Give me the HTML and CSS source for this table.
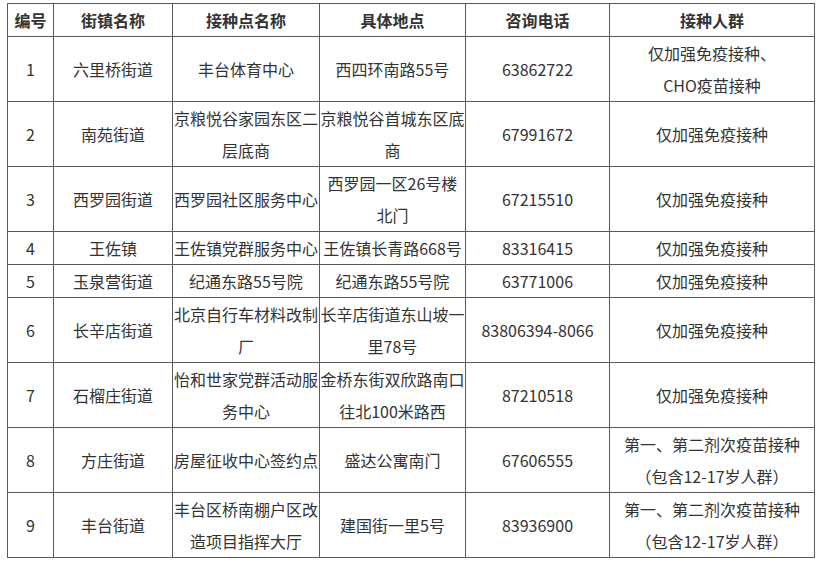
FILE: index.html
```html
<!DOCTYPE html>
<html lang="zh-CN">
<head>
<meta charset="utf-8">
<title>接种点</title>
<link rel="stylesheet" href="styles.css">
</head>
<body>
<table class="sites">
  <colgroup>
    <col class="c1"><col class="c2"><col class="c3"><col class="c4"><col class="c5"><col class="c6">
  </colgroup>
  <thead>
    <tr><th>编号</th><th>街镇名称</th><th>接种点名称</th><th>具体地点</th><th>咨询电话</th><th>接种人群</th></tr>
  </thead>
  <tbody>
    <tr class="tall"><td>1</td><td>六里桥街道</td><td>丰台体育中心</td><td>西四环南路55号</td><td>63862722</td><td>仅加强免疫接种、<br>CHO疫苗接种</td></tr>
    <tr class="tall"><td>2</td><td>南苑街道</td><td>京粮悦谷家园东区二层底商</td><td>京粮悦谷首城东区底商</td><td>67991672</td><td>仅加强免疫接种</td></tr>
    <tr class="tall"><td>3</td><td>西罗园街道</td><td>西罗园社区服务中心</td><td>西罗园一区26号楼<br>北门</td><td>67215510</td><td>仅加强免疫接种</td></tr>
    <tr><td>4</td><td>王佐镇</td><td>王佐镇党群服务中心</td><td>王佐镇长青路668号</td><td>83316415</td><td>仅加强免疫接种</td></tr>
    <tr><td>5</td><td>玉泉营街道</td><td>纪通东路55号院</td><td>纪通东路55号院</td><td>63771006</td><td>仅加强免疫接种</td></tr>
    <tr class="tall"><td>6</td><td>长辛店街道</td><td>北京自行车材料改制厂</td><td>长辛店街道东山坡一里78号</td><td>83806394-8066</td><td>仅加强免疫接种</td></tr>
    <tr class="tall"><td>7</td><td>石榴庄街道</td><td>怡和世家党群活动服务中心</td><td>金桥东街双欣路南口往北100米路西</td><td>87210518</td><td>仅加强免疫接种</td></tr>
    <tr class="tall"><td>8</td><td>方庄街道</td><td>房屋征收中心签约点</td><td>盛达公寓南门</td><td>67606555</td><td>第一、第二剂次疫苗接种<br>（包含12-17岁人群）</td></tr>
    <tr class="tall"><td>9</td><td>丰台街道</td><td>丰台区桥南棚户区改造项目指挥大厅</td><td>建国街一里5号</td><td>83936900</td><td>第一、第二剂次疫苗接种<br>（包含12-17岁人群）</td></tr>
  </tbody>
</table>
</body>
</html>
```

FILE: styles.css
```css
html, body {
  margin: 0;
  padding: 0;
  background: #ffffff;
}

body {
  padding: 3px 0 0 7px;
  font-family: "Noto Sans CJK SC", "Noto Sans", sans-serif;
  color: #333333;
  font-size: 16px;
}

.sites {
  border-collapse: collapse;
  table-layout: fixed;
  width: 807px;
}

.c1 { width: 46px; }
.c2 { width: 119px; }
.c3 { width: 147px; }
.c4 { width: 146px; }
.c5 { width: 144px; }
.c6 { width: 205px; }

.sites th,
.sites td {
  border: 1px solid #5a5a5a;
  padding: 0;
  text-align: center;
  vertical-align: middle;
  line-height: 32px;
  font-size: 16px;
  word-break: break-all;
}

.sites th {
  font-weight: bold;
  height: 32px;
}

.sites td {
  height: 32px;
}

.sites tr.tall td {
  height: 64px;
}
```
